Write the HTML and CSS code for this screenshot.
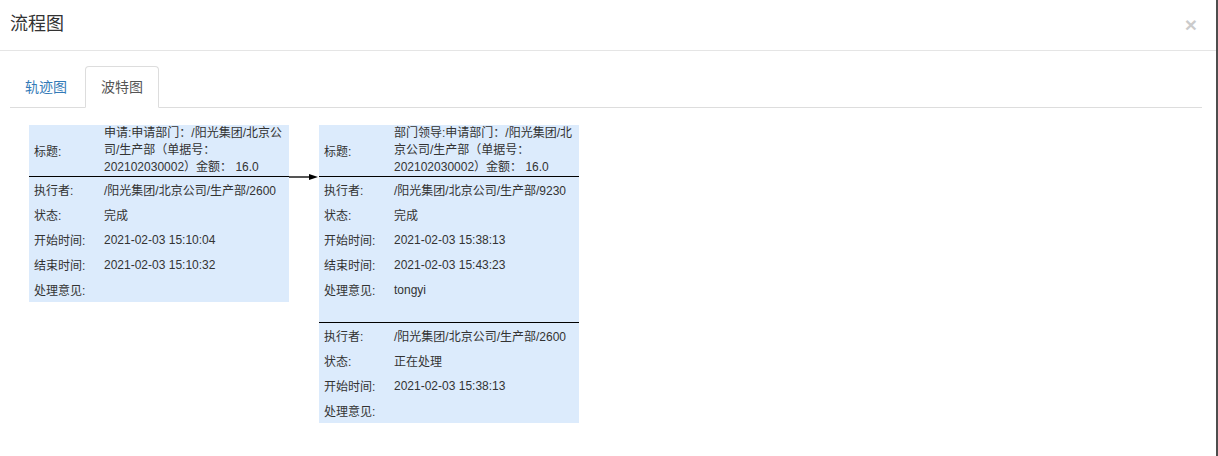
FILE: index.html
```html
<!DOCTYPE html>
<html lang="zh">
<head>
<meta charset="utf-8">
<title>流程图</title>
<link rel="stylesheet" href="styles.css">
</head>
<body>
<div class="modal">
  <div class="modal-header">
    <h4 class="modal-title">流程图</h4>
    <span class="close">×</span>
  </div>
  <div class="modal-body">
    <ul class="tabs">
      <li class="tab"><a>轨迹图</a></li>
      <li class="tab active"><a>波特图</a></li>
    </ul>
    <div class="flow">
      <div class="node">
        <div class="head">
          <div class="label">标题:</div>
          <div class="value">申请:申请部门：/阳光集团/北京公司/生产部（单据号：202102030002）金额： 16.0</div>
        </div>
        <div class="group">
          <div class="row"><span class="label">执行者:</span><span class="value">/阳光集团/北京公司/生产部/2600</span></div>
          <div class="row"><span class="label">状态:</span><span class="value">完成</span></div>
          <div class="row"><span class="label">开始时间:</span><span class="value">2021-02-03 15:10:04</span></div>
          <div class="row"><span class="label">结束时间:</span><span class="value">2021-02-03 15:10:32</span></div>
          <div class="row"><span class="label">处理意见:</span><span class="value"></span></div>
        </div>
      </div>
      <div class="arrow">
        <svg width="30" height="8" viewBox="0 0 30 8"><line x1="0" y1="4" x2="21" y2="4" stroke="#555" stroke-width="2"/><polygon points="20,1 29,4 20,7" fill="#000"/></svg>
      </div>
      <div class="node">
        <div class="head">
          <div class="label">标题:</div>
          <div class="value">部门领导:申请部门：/阳光集团/北京公司/生产部（单据号：202102030002）金额： 16.0</div>
        </div>
        <div class="group">
          <div class="row"><span class="label">执行者:</span><span class="value">/阳光集团/北京公司/生产部/9230</span></div>
          <div class="row"><span class="label">状态:</span><span class="value">完成</span></div>
          <div class="row"><span class="label">开始时间:</span><span class="value">2021-02-03 15:38:13</span></div>
          <div class="row"><span class="label">结束时间:</span><span class="value">2021-02-03 15:43:23</span></div>
          <div class="row"><span class="label">处理意见:</span><span class="value">tongyi</span></div>
        </div>
        <div class="group">
          <div class="row"><span class="label">执行者:</span><span class="value">/阳光集团/北京公司/生产部/2600</span></div>
          <div class="row"><span class="label">状态:</span><span class="value">正在处理</span></div>
          <div class="row"><span class="label">开始时间:</span><span class="value">2021-02-03 15:38:13</span></div>
          <div class="row"><span class="label">处理意见:</span><span class="value"></span></div>
        </div>
      </div>
    </div>
  </div>
</div>
</body>
</html>
```
FILE: styles.css
```css
* { box-sizing: border-box; }
html, body { margin: 0; padding: 0; background: #fff; }
body {
  font-family: "Liberation Sans", "Noto Sans CJK SC", sans-serif;
  color: #333;
}
.modal {
  width: 1218px;
  height: 456px;
  border-right: 2px solid #4d4d4d;
  overflow: hidden;
}
.modal-header {
  height: 51px;
  border-bottom: 1px solid #e5e5e5;
  display: flex;
  align-items: center;
  justify-content: space-between;
  padding: 0 19px 0 10px;
}
.modal-title {
  margin: 0;
  font-size: 18px;
  font-weight: normal;
  color: #333;
  line-height: 20px;
  padding-bottom: 2px;
}
.close {
  font-size: 21px;
  font-weight: bold;
  color: #000;
  opacity: 0.2;
  line-height: 1;
  padding-bottom: 2px;
}
.modal-body {
  padding: 15px 14px 0 9px;
}
.tabs {
  list-style: none;
  margin: 0 0 0 1px;
  padding: 0;
  display: flex;
  border-bottom: 1px solid #ddd;
}
.tab {
  margin-bottom: -1px;
}
.tab a {
  display: block;
  margin-right: 2px;
  padding: 10px 15px;
  font-size: 14px;
  line-height: 20px;
  color: #337ab7;
  border: 1px solid transparent;
  border-radius: 4px 4px 0 0;
}
.tab:first-child a {
  padding-left: 14px;
}
.tab.active a {
  color: #555;
  background: #fff;
  border-color: #ddd #ddd transparent;
}
.flow {
  display: flex;
  align-items: flex-start;
  padding: 17px 0 0 20px;
}
.node {
  width: 260px;
  background: #dcebfc;
  font-size: 12px;
}
.head {
  display: flex;
  align-items: center;
  border-bottom: 1px solid #000;
}
.head .label {
  width: 75px;
  flex: none;
  padding-left: 5px;
}
.head .value {
  width: 185px;
  flex: none;
  line-height: 17px;
}
.group + .group {
  margin-top: 20px;
  border-top: 1px solid #000;
}
.row {
  display: flex;
  height: 25px;
  align-items: center;
}
.row .label {
  width: 75px;
  flex: none;
  padding-left: 5px;
}
.arrow {
  width: 30px;
  height: 8px;
  margin-top: 48px;
  display: flex;
}
```
